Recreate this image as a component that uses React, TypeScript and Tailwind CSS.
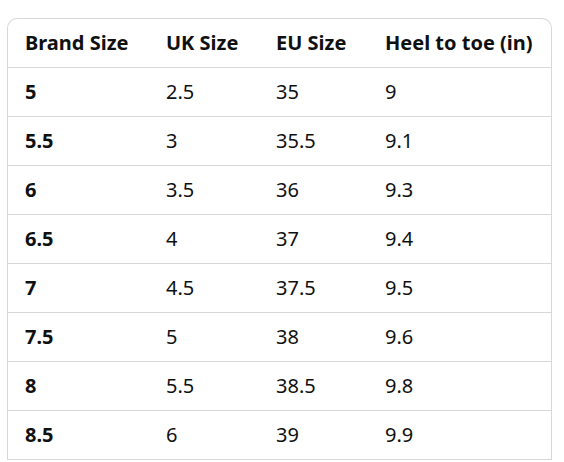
const rows = [
  ["5", "2.5", "35", "9"],
  ["5.5", "3", "35.5", "9.1"],
  ["6", "3.5", "36", "9.3"],
  ["6.5", "4", "37", "9.4"],
  ["7", "4.5", "37.5", "9.5"],
  ["7.5", "5", "38", "9.6"],
  ["8", "5.5", "38.5", "9.8"],
  ["8.5", "6", "39", "9.9"],
];

const headers = ["Brand Size", "UK Size", "EU Size", "Heel to toe (in)"];

const cols = "grid grid-cols-[141px_110px_109px_1fr]";

export default function App() {
  return (
    <div className="min-h-screen bg-white pt-[18px] pl-[7px] pr-[12px] font-['Noto_Sans',sans-serif] text-[20px] text-[#0f1111]">
      <div className="rounded-t-[10px] border border-b-0 border-[#d5d9d9] overflow-hidden">
        <div className={`${cols} h-[49px] items-center border-b border-[#d5d9d9] font-bold`}>
          {headers.map((h) => (
            <div key={h} className="pl-[17px]">{h}</div>
          ))}
        </div>
        {rows.map((r) => (
          <div key={r[0]} className={`${cols} h-[49px] items-center border-b border-[#d5d9d9]`}>
            {r.map((c, i) => (
              <div key={i} className={i === 0 ? "pl-[17px] font-bold" : "pl-[17px]"}>{c}</div>
            ))}
          </div>
        ))}
      </div>
    </div>
  );
}
